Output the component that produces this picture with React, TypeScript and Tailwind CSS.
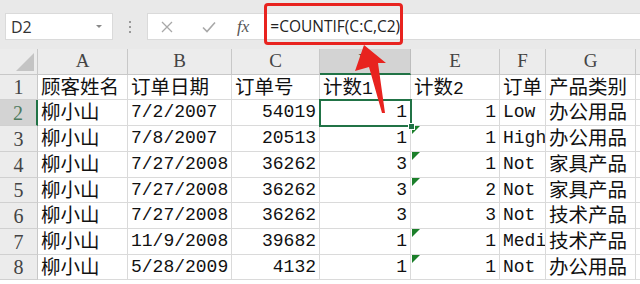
import { ReactNode } from "react";

const COLS = [
  { key: "A", w: "w-[90px]" },
  { key: "B", w: "w-[104px]" },
  { key: "C", w: "w-[88px]" },
  { key: "D", w: "w-[91px]" },
  { key: "E", w: "w-[89px]" },
  { key: "F", w: "w-[46px]" },
  { key: "G", w: "w-[90px]" },
];

const ROWS = [
  ["顾客姓名", "订单日期", "订单号", "计数1", "计数2", "订单", "产品类别"],
  ["柳小山", "7/2/2007", "54019", "1", "1", "Low", "办公用品"],
  ["柳小山", "7/8/2007", "20513", "1", "1", "High", "办公用品"],
  ["柳小山", "7/27/2008", "36262", "3", "1", "Not", "家具产品"],
  ["柳小山", "7/27/2008", "36262", "3", "2", "Not", "家具产品"],
  ["柳小山", "7/27/2008", "36262", "3", "3", "Not", "技术产品"],
  ["柳小山", "11/9/2008", "39682", "1", "1", "Medi", "技术产品"],
  ["柳小山", "5/28/2009", "4132", "1", "1", "Not", "办公用品"],
];

const HEIGHTS = ["h-[25px]", "h-[26px]", "h-[26px]", "h-[26px]", "h-[25px]", "h-[26px]", "h-[26px]", "h-[25px]"];

// rows whose E cell shows the green error marker
const FLAGGED = [3, 4, 5, 7, 8];

function seg(text: string): ReactNode[] {
  return text.split(/([\u4e00-\u9fff]+)/).filter(Boolean).map((part, i) =>
    /[\u4e00-\u9fff]/.test(part) ? (
      <span key={i} className="text-[19.5px] font-['Noto_Sans_CJK_SC',sans-serif]">
        {part}
      </span>
    ) : (
      <span key={i}>{part}</span>
    )
  );
}

function isNumber(s: string) {
  return /^\d+$/.test(s);
}

export default function App() {
  return (
    <div className="relative w-[640px] h-[284px] overflow-hidden bg-white">
      {/* Toolbar / formula bar */}
      <div className="h-[49px] bg-[#e9e9e9] pt-[13px] pl-[5px] flex items-start">
        <div className="w-[108px] h-[27px] bg-white border border-[#dadada] flex items-center justify-between px-[5px]">
          <span className="text-[16px] text-[#333] font-['Open_Sans',sans-serif]">D2</span>
          <svg width="8" height="5" viewBox="0 0 8 5" className="mr-[4px]">
            <path d="M1 1 L4 4 L7 1" fill="#888" />
          </svg>
        </div>
        <div className="w-[34px] h-[27px] flex flex-col items-center justify-center gap-[3px]">
          <div className="w-[2px] h-[2px] bg-[#999]" />
          <div className="w-[2px] h-[2px] bg-[#999]" />
          <div className="w-[2px] h-[2px] bg-[#999]" />
        </div>
        <div className="flex-1 h-[27px] bg-white border border-[#dadada] border-r-0 flex items-center">
          <svg width="14" height="14" viewBox="0 0 14 14" className="ml-[12px]">
            <path d="M2 2 L12 12 M12 2 L2 12" stroke="#a8a8a8" strokeWidth="1.3" />
          </svg>
          <svg width="16" height="14" viewBox="0 0 16 14" className="ml-[27px]">
            <path d="M2 7.5 L6 11.5 L14 2.5" stroke="#a8a8a8" strokeWidth="1.6" fill="none" />
          </svg>
          <span className="ml-[20px] text-[17px] italic text-[#555] font-['Liberation_Serif',serif]">fx</span>
          <span className="ml-[21px] text-[15.5px] text-[#222] font-['Open_Sans',sans-serif]">=COUNTIF(C:C,C2)</span>
        </div>
      </div>

      {/* Column headers */}
      <div className="flex h-[26px] font-['Liberation_Serif',serif] text-[19px] text-[#444]">
        <div className="w-[38px] h-full bg-[#ececec] border-r border-b border-[#c8c8c8] relative">
          <svg width="18" height="18" viewBox="0 0 18 18" className="absolute right-[3px] bottom-[3px]">
            <path d="M18 0 L18 18 L0 18 Z" fill="#c4c4c4" />
          </svg>
        </div>
        {COLS.map((c) => (
          <div
            key={c.key}
            className={`${c.w} shrink-0 h-full flex items-center justify-center border-r ${
              c.key === "D"
                ? "bg-[#d3d3d3] border-b-2 border-b-[#217346] border-r-[#bdbdbd]"
                : "bg-[#ececec] border-b border-[#c8c8c8]"
            }`}
          >
            {c.key}
          </div>
        ))}
        <div className="flex-1 h-full bg-[#ececec] border-b border-[#c8c8c8]" />
      </div>

      {/* Data rows */}
      {ROWS.map((row, r) => {
        const rowNum = r + 1;
        const selected = rowNum === 2;
        return (
          <div key={rowNum} className={`flex ${HEIGHTS[r]}`}>
            <div
              className={`w-[38px] shrink-0 h-full flex items-center justify-center font-['Liberation_Serif',serif] text-[20px] border-b border-[#d0d0d0] ${
                selected
                  ? "bg-[#d3d3d3] text-[#4d7a5e] border-r-2 border-r-[#217346]"
                  : "bg-[#ececec] text-[#444] border-r border-r-[#c8c8c8]"
              }`}
            >
              {rowNum}
            </div>
            {COLS.map((c, ci) => {
              const v = row[ci];
              const right = rowNum > 1 && isNumber(v);
              return (
                <div
                  key={c.key}
                  className={`${c.w} shrink-0 h-full relative flex items-center whitespace-nowrap border-r border-b border-[#dadada] font-['Liberation_Mono',monospace] text-[18px] text-[#111] ${
                    right ? "justify-end pr-[3px]" : "justify-start pl-[3px]"
                  } ${c.key === "F" ? "overflow-hidden" : ""}`}
                >
                  <span className="leading-[23px]">{seg(v)}</span>
                  {c.key === "E" && FLAGGED.includes(rowNum) && (
                    <svg width="8" height="8" viewBox="0 0 8 8" className="absolute left-[1px] top-0">
                      <path d="M0 0 L8 0 L0 8 Z" fill="#1b7f2a" />
                    </svg>
                  )}
                </div>
              );
            })}
            <div className="flex-1 h-full border-b border-[#dadada]" />
          </div>
        );
      })}

      {/* Active cell D2 outline */}
      <div className="absolute left-[319px] top-[99px] w-[93px] h-[28px] border-2 border-[#217346] pointer-events-none" />
      <div className="absolute left-[408px] top-[123px] w-[7px] h-[7px] bg-[#217346] border border-white" />

      {/* Annotation: red box around formula */}
      <div className="absolute left-[264px] top-[3px] w-[139px] h-[42px] border-[3px] border-[#e8231f] rounded-[4px]" />

      {/* Annotation: red arrow */}
      <svg width="640" height="284" viewBox="0 0 640 284" className="absolute left-0 top-0 pointer-events-none">
        <path
          d="M364 45 L386 63 L378 63 L385 113 L382 113 L369 67 L355 71 Z"
          fill="#e8231f"
        />
      </svg>
    </div>
  );
}
